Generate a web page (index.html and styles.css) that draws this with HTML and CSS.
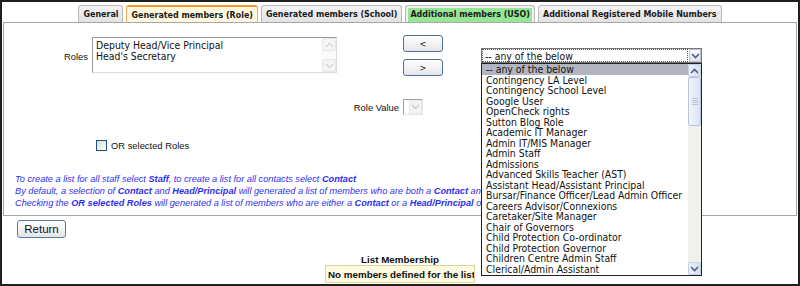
FILE: index.html
```html
<!DOCTYPE html>
<html lang="en">
<head>
    <meta charset="UTF-8">
    <title>Generated members (Role)</title>
    <link rel="stylesheet" href="styles.css">
</head>
<body>
<div class="page">
    <ul class="tabs">
        <li class="tab">General</li>
        <li class="tab active">Generated members (Role)</li>
        <li class="tab">Generated members (School)</li>
        <li class="tab uso"><span>Additional members (USO)</span></li>
        <li class="tab">Additional Registered Mobile Numbers</li>
    </ul>

    <div class="panel">
        <div class="role-grid">
            <label class="roles-label">Roles</label>
            <div class="listbox">
                <div class="listbox-items">
                    <div>Deputy Head/Vice Principal</div>
                    <div>Head's Secretary</div>
                </div>
                <div class="scroll disabled">
                    <span class="arrow up"><svg width="9" height="6" viewBox="0 0 9 6"><path d="M1 5l3.5-3.5L8 5" fill="none" stroke="#d4d8de" stroke-width="1.4"/></svg></span>
                    <span class="arrow down"><svg width="9" height="6" viewBox="0 0 9 6"><path d="M1 1l3.5 3.5L8 1" fill="none" stroke="#d4d8de" stroke-width="1.4"/></svg></span>
                </div>
            </div>
            <div class="move-buttons">
                <button class="move">&lt;</button>
                <button class="move">&gt;</button>
            </div>
            <div class="combo">
                <span class="combo-text">-- any of the below</span>
                <span class="combo-btn"><svg width="9" height="6" viewBox="0 0 9 6"><path d="M1 1l3.5 3.5L8 1" fill="none" stroke="#4d6185" stroke-width="1.6"/></svg></span>
            </div>
            <label class="value-label">Role Value</label>
            <div class="mini-select"><span><svg width="9" height="6" viewBox="0 0 9 6"><path d="M1 1l3.5 3.5L8 1" fill="none" stroke="#c9cdd6" stroke-width="1.4"/></svg></span></div>
        </div>

        <label class="or-roles"><span class="checkbox"></span>OR selected Roles</label>

        <div class="notes">
            <p>To create a list for all staff select <b>Staff</b>, to create a list for all contacts select <b>Contact</b></p>
            <p>By default, a selection of <b>Contact</b> and <b>Head/Principal</b> will generated a list of members who are both a <b>Contact</b> and <b>Head/Principal</b></p>
            <p>Checking the <b>OR selected Roles</b> will generated a list of members who are either a <b>Contact</b> or a <b>Head/Principal</b> or both</p>
        </div>
    </div>

    <button class="return">Return</button>

    <div class="membership">
        <div class="membership-title">List Membership</div>
        <div class="membership-empty">No members defined for the list</div>
    </div>

    <div class="dropdown">
        <ul class="options">
            <li class="selected">-- any of the below</li>
            <li>Contingency LA Level</li>
            <li>Contingency School Level</li>
            <li>Google User</li>
            <li>OpenCheck rights</li>
            <li>Sutton Blog Role</li>
            <li>Academic IT Manager</li>
            <li>Admin IT/MIS Manager</li>
            <li>Admin Staff</li>
            <li>Admissions</li>
            <li>Advanced Skills Teacher (AST)</li>
            <li>Assistant Head/Assistant Principal</li>
            <li>Bursar/Finance Officer/Lead Admin Officer</li>
            <li>Careers Advisor/Connexions</li>
            <li>Caretaker/Site Manager</li>
            <li>Chair of Governors</li>
            <li>Child Protection Co-ordinator</li>
            <li>Child Protection Governor</li>
            <li>Children Centre Admin Staff</li>
            <li>Clerical/Admin Assistant</li>
        </ul>
        <div class="scroll">
            <span class="arrow up"><svg width="9" height="6" viewBox="0 0 9 6"><path d="M1 5l3.5-3.5L8 5" fill="none" stroke="#4d6185" stroke-width="1.6"/></svg></span>
            <span class="thumb"><i></i></span>
            <span class="track"></span>
            <span class="arrow down"><svg width="9" height="6" viewBox="0 0 9 6"><path d="M1 1l3.5 3.5L8 1" fill="none" stroke="#4d6185" stroke-width="1.6"/></svg></span>
        </div>
    </div>
</div>
</body>
</html>
```

FILE: styles.css
```css
body {
    margin: 0;
    font-family: 'Liberation Sans', Arial, sans-serif;
    background: #fff;
}

.page {
    position: relative;
    height: 286px;
    box-sizing: border-box;
    border: 2px solid #1f1f1f;
    overflow: hidden;
}

/* tabs */
.tabs {
    display: flex;
    justify-content: center;
    gap: 3px;
    list-style: none;
    margin: 0;
    padding: 3px 0 0 0;
}

.tab {
    height: 16px;
    line-height: 16px;
    padding: 0 4px;
    border: 1px solid #b9b9b9;
    border-bottom: none;
    border-radius: 3px 3px 0 0;
    background: linear-gradient(#f4f4f4, #e2e2e2);
    font-family: 'DejaVu Sans Condensed', Tahoma, sans-serif;
    font-weight: bold;
    font-size: 8.85px;
    color: #1a1a1a;
}

.tab.active {
    background: #fff7df;
    border-color: #f0b050;
    border-top: 2px solid #f39c2a;
    height: 15px;
}

.tab.uso {
    padding: 0 2px;
    background: #f0f0f0;
}

.tab.uso span {
    display: block;
    padding: 0 2px;
    background: #97e597;
    margin-top: 2px;
    height: 14px;
    line-height: 13px;
}

/* panel */
.panel {
    margin: 0 1px;
    height: 192px;
    border: 1px solid #a7a7a7;
    font-size: 9.4px;
    color: #111;
}

.role-grid {
    display: grid;
    grid-template-columns: 84px 4px 245px 62px 4px 40px 38px 221px;
    grid-template-rows: 41px 16px;
    row-gap: 23px;
    margin-top: 12px;
}

.roles-label {
    grid-column: 1;
    grid-row: 1;
    text-align: right;
    align-self: center;
    padding-top: 2px;
}

.listbox {
    grid-column: 3;
    grid-row: 1;
    margin-top: 2px;
    height: 36px;
    display: flex;
    border: 1px solid #9a9a9a;
    border-right-color: #dcdcdc;
    border-bottom-color: #dcdcdc;
    box-sizing: border-box;
    font-family: 'DejaVu Sans Condensed', Tahoma, sans-serif;
    font-size: 10.4px;
}

.listbox-items {
    flex: 1;
    padding: 2px 3px;
    line-height: 10.5px;
}

.move-buttons {
    grid-column: 6;
    grid-row: 1;
    display: flex;
    flex-direction: column;
    gap: 7px;
}

.move {
    width: 40px;
    height: 17px;
    padding: 0;
    border: 1px solid #4f6f9a;
    border-radius: 3px;
    background: linear-gradient(#ffffff, #e4e6ea);
    font-family: 'DejaVu Sans Condensed', Tahoma, sans-serif;
    font-size: 9px;
    color: #111;
}

.combo {
    grid-column: 8;
    grid-row: 1;
    margin-top: 13px;
    height: 15px;
    display: flex;
    border: 1px solid #777;
    box-sizing: border-box;
    font-family: 'DejaVu Sans Condensed', Tahoma, sans-serif;
    font-size: 10.4px;
}

.combo-text {
    flex: 1;
    padding-left: 2px;
    line-height: 12px;
    border: 1px dotted #555;
    margin: 0 1px 0 0;
}

.combo-btn {
    width: 12px;
    display: flex;
    align-items: center;
    justify-content: center;
    background: linear-gradient(#fafbfd, #dfe3ea);
    border: 1px solid #bcc5d4;
    box-sizing: border-box;
}

.value-label {
    grid-column: 1 / 5;
    grid-row: 2;
    text-align: right;
    align-self: center;
}

.mini-select {
    grid-column: 6;
    grid-row: 2;
    width: 20px;
    height: 16px;
    box-sizing: border-box;
    border: 1px solid #a0a0a0;
    border-right-color: #e6e6e6;
    border-bottom-color: #e6e6e6;
    display: flex;
    justify-content: flex-end;
}

.mini-select span {
    width: 13px;
    display: flex;
    align-items: center;
    justify-content: center;
    background: #f3f3f3;
    border: 1px solid #eaeaea;
    box-sizing: border-box;
}

.or-roles {
    display: flex;
    align-items: center;
    gap: 4px;
    margin: 25px 0 0 92px;
    height: 11px;
}

.checkbox {
    width: 9px;
    height: 9px;
    border: 1px solid #1c5180;
    background: linear-gradient(135deg, #dcdcd6, #fff);
}

.notes {
    margin: 22px 0 0 11px;
    color: #2f2ff0;
    font-style: italic;
    font-size: 9.2px;
}

.notes p {
    margin: 0;
    line-height: 12px;
    white-space: nowrap;
}

/* below the panel */
.return {
    display: block;
    margin: 4px 0 0 15px;
    width: 49px;
    height: 18px;
    padding: 0;
    border: 1px solid #5a7aa6;
    border-radius: 3px;
    background: linear-gradient(#ffffff, #e3e5ea);
    font-family: 'Liberation Sans', Arial, sans-serif;
    font-size: 11.5px;
    color: #111;
}

.membership {
    display: flex;
    flex-direction: column;
    align-items: center;
    margin-top: 16px;
    font-weight: bold;
    font-size: 9.8px;
    color: #111;
}

.membership-title {
    line-height: 11px;
}

.membership-empty {
    width: 150px;
    height: 18px;
    line-height: 17px;
    box-sizing: border-box;
    border: 1px solid #e2d29a;
    background: #fffbe0;
    padding-left: 2px;
    white-space: nowrap;
    overflow: hidden;
}

/* open select list */
.dropdown {
    position: absolute;
    left: 479px;
    top: 61px;
    width: 221px;
    height: 213px;
    box-sizing: border-box;
    border: 1px solid #222;
    background: #fff;
    display: flex;
    font-family: 'DejaVu Sans Condensed', Tahoma, sans-serif;
    font-size: 10.4px;
    color: #111;
}

.options {
    flex: 1;
    list-style: none;
    margin: 0;
    padding: 0;
    overflow: hidden;
}

.options li {
    height: 10.5px;
    line-height: 10.5px;
    padding-left: 4px;
    white-space: nowrap;
}

.options li.selected {
    background: #b2b4bf;
}

.scroll {
    width: 13px;
    display: flex;
    flex-direction: column;
    background: #f4f4f1;
}

.scroll.disabled {
    justify-content: space-between;
    background: #fbfbfb;
    width: 14px;
}

.scroll .arrow {
    height: 13px;
    display: flex;
    align-items: center;
    justify-content: center;
    border: 1px solid #c3d0e6;
    border-radius: 2px;
    background: linear-gradient(90deg, #eef2fb, #d6def0);
    box-sizing: border-box;
}

.scroll.disabled .arrow {
    border-color: #e6e6e6;
    background: #f5f5f5;
}

.thumb {
    height: 47px;
    border: 1px solid #b7c4dd;
    border-radius: 2px;
    background: linear-gradient(90deg, #f1f4fb, #dbe2f1);
    display: flex;
    align-items: center;
    justify-content: center;
}

.thumb i {
    width: 6px;
    height: 7px;
    background: repeating-linear-gradient(#b9c4d9 0 1px, transparent 1px 2px);
}

.track {
    flex: 1;
    background: #f1f1ec;
}
```
